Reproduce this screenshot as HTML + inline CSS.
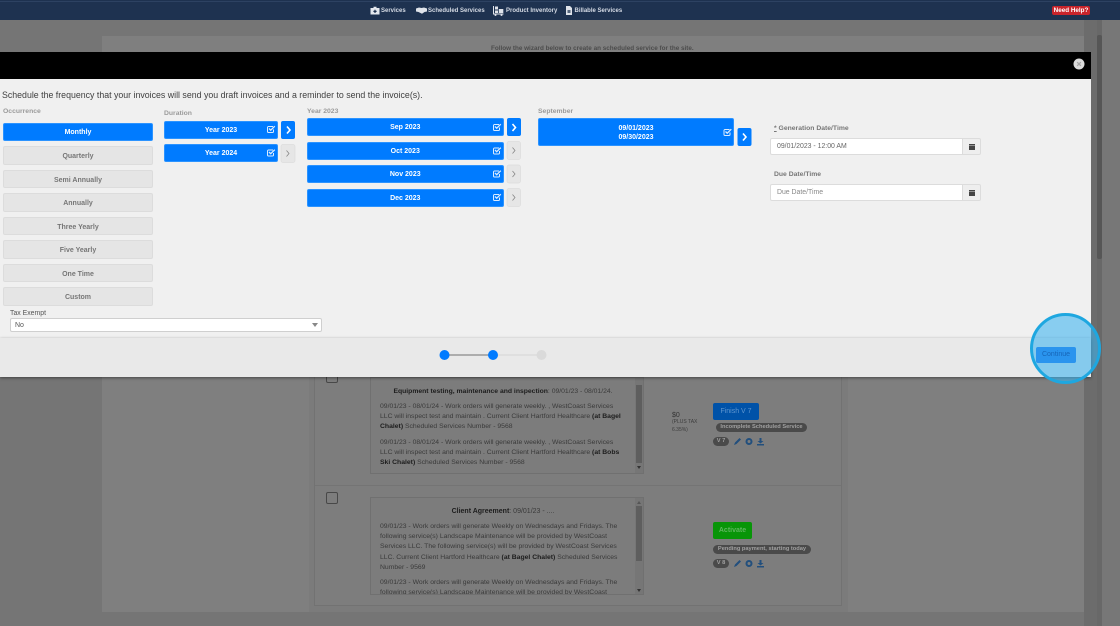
<!DOCTYPE html>
<html><head><meta charset="utf-8"><style>
html,body{margin:0;padding:0;width:1120px;height:626px;overflow:hidden;background:#6f6f6f;font-family:"Liberation Sans",sans-serif}
#w{position:relative;width:1120px;height:626px;overflow:hidden;filter:blur(.35px)}
#w div,#w span.a,#w svg.a{position:absolute;box-sizing:border-box}
.b{background:#007bff;border:1px solid #2b93ff;border-radius:2px;color:#fff;font:bold 7px/1 "Liberation Sans",sans-serif;text-align:center}
.g{left:3px;width:150px;background:#e5e5e5;border:1px solid #dcdcdc;border-radius:2px;color:#767676;font:bold 7px/19px "Liberation Sans",sans-serif;text-align:center}
.l{font:bold 6.800px/9px "Liberation Sans",sans-serif;color:#9a9a9a}
.t{font:6.820px/10.300px "Liberation Sans",sans-serif;color:#3a3a3a;white-space:nowrap}
.t b{color:#1d1d1d}
.n{font:bold 6px/8px "Liberation Sans",sans-serif;color:#d5dbe5;white-space:nowrap;top:7px}
.pill{background:#4a4a4a;color:#a0a0a0;border-radius:5px;font:bold 5.700px/9px "Liberation Sans",sans-serif;height:9px;white-space:nowrap;text-align:center}
</style></head><body><div id="w">
<div style="left:0;top:0;width:1120px;height:20px;background:#1e3250;border-top:1px solid #1e3250"></div>
<div style="left:0;top:1px;width:1120px;height:1px;background:#2d4262"></div>
<div style="left:0;top:20px;width:1120px;height:606px;background:#757575"></div>
<div style="left:102px;top:36px;width:982px;height:576px;background:#7f7f7f"></div>
<div style="left:1084px;top:20px;width:13px;height:606px;background:#6c6c6c"></div>
<div style="left:1097px;top:20px;width:5px;height:606px;background:#686868"></div>
<div style="left:1097px;top:35px;width:5px;height:224px;background:#565656;border-radius:2px"></div>
<div style="left:1102px;top:20px;width:18px;height:606px;background:#777"></div>

<svg class="a" style="left:370px;top:6px" width="10" height="9" viewBox="0 0 10 9"><path d="M3.500 2V.8h3V2H9.500v6.500H.5V2z" fill="#e4e8ee"/><path d="M4.400 3.800h1.200v1h1v1.200h-1v1H4.400v-1h-1V4.800h1z" fill="#1e3250"/></svg>
<span class="a n" style="left:381px">Services</span>
<svg class="a" style="left:416px;top:7px" width="11" height="7" viewBox="0 0 11 7"><path d="M0 1.500 3 .5 5.500 1 8 .5l3 1v3L8.500 5 6 6.800 2.500 5 0 4.500z" fill="#dfe3ea"/></svg>
<span class="a n" style="left:428px">Scheduled Services</span>
<svg class="a" style="left:493px;top:5.500px" width="11" height="10" viewBox="0 0 11 10"><path d="M.5 0v8h10" stroke="#dfe3ea" fill="none"/><rect x="2" y=".5" width="3" height="3" fill="#dfe3ea"/><rect x="2" y="4.500" width="3" height="2.500" fill="#dfe3ea"/><rect x="5.800" y="3" width="4.500" height="4" fill="#dfe3ea"/><circle cx="2.500" cy="9" r="1" fill="#dfe3ea"/><circle cx="8.500" cy="9" r="1" fill="#dfe3ea"/></svg>
<span class="a n" style="left:506px">Product Inventory</span>
<svg class="a" style="left:566px;top:6px" width="6" height="9" viewBox="0 0 6 9"><path d="M0 0h4l2 2v7H0z" fill="#dfe3ea"/><path d="M1.500 4h3v3h-3z" fill="#55657c"/></svg>
<span class="a n" style="left:574.500px">Billable Services</span>
<div style="left:1052px;top:6px;width:38px;height:9px;background:#c9242b;border-radius:2px;color:#fff;font:bold 6.300px/10px 'Liberation Sans',sans-serif;text-align:center;white-space:nowrap">Need Help?</div>
<span class="a" style="left:491px;top:45px;font:bold 6.350px/8px 'Liberation Sans',sans-serif;color:#4c4c4c;white-space:nowrap">Follow the wizard below to create an scheduled service for the site.</span>

<!-- lower content -->
<div style="left:309px;top:370px;width:539px;height:242px;background:#7b7b7b"></div>
<div style="left:314px;top:370px;width:528px;height:236px;background:#7d7d7d;border:1px solid #727272;border-top:none"></div>
<div style="left:315px;top:485px;width:526px;height:1px;background:#747474"></div>
<div style="left:326px;top:372px;width:12px;height:11px;border:1px solid #484848;border-radius:2px"></div>
<div style="left:326px;top:492px;width:12px;height:12px;border:1px solid #484848;border-radius:2px"></div>

<div style="left:370px;top:377px;width:274px;height:97px;background:#7c7c7c;border:1px solid #707070;overflow:hidden">
 <div style="left:0;top:9px;width:264px;text-align:center;font:6.800px/10px 'Liberation Sans',sans-serif;color:#3a3a3a;white-space:nowrap"><b style="color:#1d1d1d">Equipment testing, maintenance and inspection</b>: 09/01/23 - 08/01/24.</div>
 <div class="t" style="left:9px;top:23.500px">09/01/23 - 08/01/24 - Work orders will generate weekly. , WestCoast Services<br>LLC will inspect test and maintain . Current Client Hartford Healthcare <b>(at Bagel</b><br><b>Chalet)</b> Scheduled Services Number - 9568</div>
 <div class="t" style="left:9px;top:59.500px">09/01/23 - 08/01/24 - Work orders will generate weekly. , WestCoast Services<br>LLC will inspect test and maintain . Current Client Hartford Healthcare <b>(at Bobs</b><br><b>Ski Chalet)</b> Scheduled Services Number - 9568</div>
 <div style="left:264px;top:0;width:8px;height:96px;background:#767676"></div>
 <div style="left:265px;top:7px;width:6px;height:78px;background:#5e5e5e"></div>
 <svg class="a" style="left:266px;top:88px" width="4" height="3" viewBox="0 0 4 3"><path d="M0 0h4L2 3z" fill="#333"/></svg>
</div>
<div style="left:370px;top:497px;width:274px;height:98px;background:#7c7c7c;border:1px solid #707070;overflow:hidden">
 <div style="left:0;top:8.500px;width:264px;text-align:center;font:7px/10px 'Liberation Sans',sans-serif;color:#3a3a3a;white-space:nowrap"><b style="color:#1d1d1d">Client Agreement</b>: 09/01/23 - ....</div>
 <div class="t" style="left:9px;top:23.500px;line-height:10.400px">09/01/23 - Work orders will generate Weekly on Wednesdays and Fridays. The<br>following service(s) Landscape Maintenance will be provided by WestCoast<br>Services LLC. The following service(s) will be provided by WestCoast Services<br>LLC. Current Client Hartford Healthcare <b>(at Bagel Chalet)</b> Scheduled Services<br>Number - 9569</div>
 <div class="t" style="left:9px;top:79.500px;line-height:10.400px">09/01/23 - Work orders will generate Weekly on Wednesdays and Fridays. The<br>following service(s) Landscape Maintenance will be provided by WestCoast</div>
 <div style="left:264px;top:0;width:8px;height:97px;background:#767676"></div>
 <div style="left:265px;top:8px;width:6px;height:55px;background:#5e5e5e"></div>
 <svg class="a" style="left:266px;top:3px" width="4" height="3" viewBox="0 0 4 3"><path d="M0 3h4L2 0z" fill="#555"/></svg>
 <svg class="a" style="left:266px;top:91px" width="4" height="3" viewBox="0 0 4 3"><path d="M0 0h4L2 3z" fill="#333"/></svg>
</div>

<span class="a" style="left:672px;top:411px;font:7px/9px 'Liberation Sans',sans-serif;color:#333">$0</span>
<span class="a" style="left:672px;top:419px;font:5px/7.500px 'Liberation Sans',sans-serif;color:#3c3c3c;white-space:nowrap">(PLUS TAX<br>6.35%)</span>
<div style="left:713px;top:403px;width:46px;height:17px;background:#0052a8;border-radius:2px;color:#5f96cf;font:7px/18px 'Liberation Sans',sans-serif;text-align:center">Finish V 7</div>
<div class="pill" style="left:716px;top:423px;width:91px">Incomplete Scheduled Service</div>
<div class="pill" style="left:713px;top:437px;width:16px">V 7</div>
<div style="left:713px;top:522px;width:39px;height:17px;background:#089508;border-radius:2px;color:#5fb65f;font:bold 7px/18px 'Liberation Sans',sans-serif;text-align:center">Activate</div>
<div class="pill" style="left:713px;top:545px;width:98px">Pending payment, starting today</div>
<div class="pill" style="left:713px;top:559px;width:16px">V 8</div>
<svg class="a" style="left:733px;top:437px" width="32" height="9" viewBox="0 0 32 9"><path d="M1 8l1-2.500L6.500 1 8 2.500 3.500 7z" fill="#224f7d"/><circle cx="16" cy="4.500" r="2.500" fill="none" stroke="#224f7d" stroke-width="2"/><path d="M26.500 1h2v3h2l-3 2.500-3-2.500h2zM24 7h7v1.500h-7z" fill="#224f7d"/></svg>
<svg class="a" style="left:733px;top:559px" width="32" height="9" viewBox="0 0 32 9"><path d="M1 8l1-2.500L6.500 1 8 2.500 3.500 7z" fill="#224f7d"/><circle cx="16" cy="4.500" r="2.500" fill="none" stroke="#224f7d" stroke-width="2"/><path d="M26.500 1h2v3h2l-3 2.500-3-2.500h2zM24 7h7v1.500h-7z" fill="#224f7d"/></svg>

<!-- modal -->
<div style="left:0;top:52px;width:1091px;height:27px;background:#000"></div>
<div style="left:0;top:79px;width:1091px;height:259px;background:#f0f0f0"></div>
<div style="left:0;top:338px;width:1091px;height:39px;background:#e9e9e9;box-shadow:0 1px 3px rgba(0,0,0,.45)"></div>
<svg class="a" style="left:1072.500px;top:57.500px" width="12" height="12" viewBox="0 0 12 12"><circle cx="6" cy="6" r="5.500" fill="#dcdcdc"/><path d="M4.200 4.200l3.600 3.600m0-3.600l-3.600 3.600" stroke="#a5a5a5" stroke-width="1.300"/></svg>
<span class="a" style="left:2px;top:90px;font:8.800px/11px 'Liberation Sans',sans-serif;color:#3f3f3f;white-space:nowrap">Schedule the frequency that your invoices will send you draft invoices and a reminder to send the invoice(s).</span>

<span class="a l" style="left:3px;top:107px">Occurrence</span>
<span class="a l" style="left:164px;top:109px">Duration</span>
<span class="a l" style="left:307px;top:107px">Year 2023</span>
<span class="a l" style="left:538px;top:107px">September</span>

<div class="b" style="left:3px;top:123px;width:150px;height:18px;line-height:17.500px">Monthly</div>
<div class="g" style="top:146px;height:19px">Quarterly</div>
<div class="g" style="top:170px;height:18px">Semi Annually</div>
<div class="g" style="top:193px;height:19px">Annually</div>
<div class="g" style="top:217px;height:18px">Three Yearly</div>
<div class="g" style="top:240px;height:19px">Five Yearly</div>
<div class="g" style="top:264px;height:18px">One Time</div>
<div class="g" style="top:287px;height:19px">Custom</div>

<div class="b" style="left:164px;top:121px;width:114px;height:18px;line-height:18.500px">Year 2023</div>
<div class="b" style="left:164px;top:144px;width:114px;height:18px;line-height:18.500px">Year 2024</div>
<div class="b" style="left:307px;top:118px;width:196.500px;height:18px;line-height:18.500px">Sep 2023</div>
<div class="b" style="left:307px;top:142px;width:196.500px;height:18px;line-height:18.500px">Oct 2023</div>
<div class="b" style="left:307px;top:165px;width:196.500px;height:18px;line-height:18.500px">Nov 2023</div>
<div class="b" style="left:307px;top:189px;width:196.500px;height:18px;line-height:18.500px">Dec 2023</div>
<div class="b" style="left:538px;top:118px;width:196px;height:28px;line-height:9.500px;padding-top:4.500px">09/01/2023<br>09/30/2023</div>

<svg class="a" style="left:0;top:0;pointer-events:none" width="1120" height="626" viewBox="0 0 1120 626">
 <defs><g id="c"><path d="M6.500 4.500v2a1 1 0 0 1-1 1h-4a1 1 0 0 1-1-1v-4a1 1 0 0 1 1-1h4.500" fill="none" stroke="#dcecff" stroke-width="1"/><path d="M2 3.500l1.700 1.700L7.800 1.200" fill="none" stroke="#dcecff" stroke-width="1.300"/></g>
 <path id="w1" d="M0 0l3 3.500L0 7" fill="none" stroke="#fff" stroke-width="1.600"/>
 <path id="g1" d="M0 0l2.500 3L0 6" fill="none" stroke="#888" stroke-width=".8"/></defs>
 <rect x="281" y="121" width="14" height="18" rx="2" fill="#007bff"/>
 <rect x="507" y="118" width="14" height="18" rx="2" fill="#007bff"/>
 <rect x="737.500" y="128" width="14" height="18" rx="2" fill="#007bff"/>
 <rect x="281" y="144.500" width="14" height="18" rx="2" fill="#e6e6e6" stroke="#dcdcdc" stroke-width=".7"/>
 <rect x="507" y="141.500" width="13.500" height="18" rx="2" fill="#e6e6e6" stroke="#dcdcdc" stroke-width=".7"/>
 <rect x="507" y="165" width="13.500" height="18" rx="2" fill="#e6e6e6" stroke="#dcdcdc" stroke-width=".7"/>
 <rect x="507" y="188.500" width="13.500" height="18" rx="2" fill="#e6e6e6" stroke="#dcdcdc" stroke-width=".7"/>
 <use href="#w1" x="287" y="126.500"/><use href="#w1" x="512.500" y="124"/><use href="#w1" x="743" y="133.500"/>
 <use href="#g1" x="286.500" y="150.500"/><use href="#g1" x="512.500" y="147.500"/><use href="#g1" x="512.500" y="171"/><use href="#g1" x="512.500" y="194.500"/>
 <use href="#c" x="267" y="125"/><use href="#c" x="267" y="148.500"/>
 <use href="#c" x="493" y="123"/><use href="#c" x="493" y="146.500"/><use href="#c" x="493" y="169.500"/><use href="#c" x="493" y="193"/>
 <use href="#c" x="723.500" y="128"/>
 <!-- stepper -->
 <line x1="444" y1="355" x2="493" y2="355" stroke="#999" stroke-width="1.500"/>
 <line x1="493" y1="355" x2="541" y2="355" stroke="#dcdcdc" stroke-width="1.500"/>
 <circle cx="444.500" cy="355" r="5" fill="#007bff"/><circle cx="493" cy="355" r="5" fill="#007bff"/><circle cx="541.500" cy="355" r="5" fill="#dadada"/>
</svg>

<span class="a" style="left:774px;top:123.500px;font:bold 6.800px/9px 'Liberation Sans',sans-serif;color:#777;white-space:nowrap"><u>*</u> Generation Date/Time</span>
<span class="a" style="left:774px;top:169.500px;font:bold 6.800px/9px 'Liberation Sans',sans-serif;color:#777;white-space:nowrap">Due Date/Time</span>
<div style="left:770px;top:138px;width:193px;height:17px;background:#fff;border:1px solid #dcdcdc;border-radius:2px 0 0 2px;font:6.900px/16px 'Liberation Sans',sans-serif;color:#666;padding-left:6px">09/01/2023 - 12:00 AM</div>
<div style="left:963px;top:138px;width:18px;height:17px;background:#eee;border:1px solid #dcdcdc;border-left:none;border-radius:0 2px 2px 0"></div>
<div style="left:770px;top:184px;width:193px;height:17px;background:#fff;border:1px solid #dcdcdc;border-radius:2px 0 0 2px;font:6.900px/16px 'Liberation Sans',sans-serif;color:#888;padding-left:6px">Due Date/Time</div>
<div style="left:963px;top:184px;width:18px;height:17px;background:#eee;border:1px solid #dcdcdc;border-left:none;border-radius:0 2px 2px 0"></div>
<svg class="a" style="left:969px;top:143px" width="6" height="7" viewBox="0 0 6 7"><path d="M0 1h6v6H0z" fill="#444"/><path d="M0 2.500h6" stroke="#ddd" stroke-width=".5"/></svg>
<svg class="a" style="left:969px;top:189px" width="6" height="7" viewBox="0 0 6 7"><path d="M0 1h6v6H0z" fill="#444"/><path d="M0 2.500h6" stroke="#ddd" stroke-width=".5"/></svg>

<span class="a" style="left:10px;top:309.500px;font:6.900px/8px 'Liberation Sans',sans-serif;color:#555">Tax Exempt</span>
<div style="left:10px;top:318px;width:312px;height:14px;background:#fff;border:1px solid #cfcfcf;border-radius:2px;font:7px/13px 'Liberation Sans',sans-serif;color:#555;padding-left:4px">No</div>
<svg class="a" style="left:312px;top:323px" width="6" height="4" viewBox="0 0 6 4"><path d="M0 0h6L3 4z" fill="#888"/></svg>

<!-- continue + highlight -->
<div style="left:1030px;top:313px;width:71px;height:71px;border-radius:50%;background:rgba(60,180,240,.58);border:3px solid #1ea7e0"></div>
<div style="left:1036px;top:347px;width:40px;height:16px;background:#2a94ee;border-radius:2px;color:#1766b8;font:7px/16px 'Liberation Sans',sans-serif;text-align:center">Continue</div>
</div></body></html>
